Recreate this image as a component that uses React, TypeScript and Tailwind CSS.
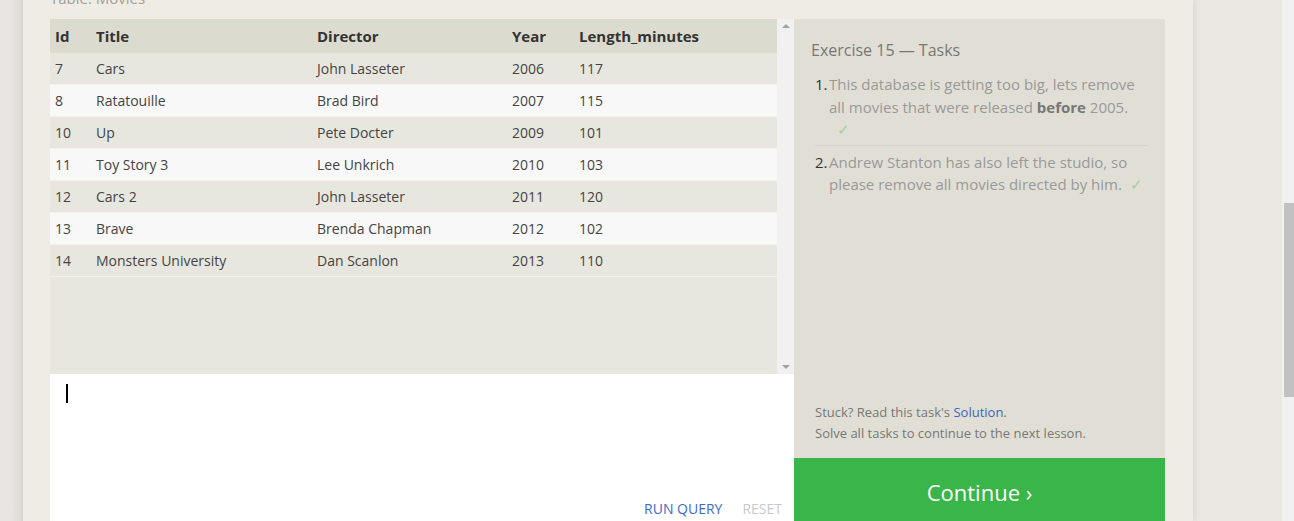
import React from 'react';

type Movie = { id: number; title: string; director: string; year: number; length: number };

const movies: Movie[] = [
    { id: 7, title: 'Cars', director: 'John Lasseter', year: 2006, length: 117 },
    { id: 8, title: 'Ratatouille', director: 'Brad Bird', year: 2007, length: 115 },
    { id: 10, title: 'Up', director: 'Pete Docter', year: 2009, length: 101 },
    { id: 11, title: 'Toy Story 3', director: 'Lee Unkrich', year: 2010, length: 103 },
    { id: 12, title: 'Cars 2', director: 'John Lasseter', year: 2011, length: 120 },
    { id: 13, title: 'Brave', director: 'Brenda Chapman', year: 2012, length: 102 },
    { id: 14, title: 'Monsters University', director: 'Dan Scanlon', year: 2013, length: 110 },
];

const cols = 'grid grid-cols-[41px_221px_195px_67px_1fr] pl-[5px]';

const Check: React.FC = () => <span className="text-[#9fcf9f] text-[15px] ml-2">✓</span>;

const App: React.FC = () => {
    return (
        <div className="h-[521px] overflow-hidden flex bg-[#ebe7e3] font-['Open_Sans',sans-serif] text-[#333]">
            <div className="w-[23px] shrink-0 bg-gradient-to-r from-[#e9e5e2] from-50% to-[#dcd6d4]" />

            {/* lesson card */}
            <div className="w-[1170px] shrink-0 bg-[#efece5] pl-[27px] pr-[28px] shadow-[2px_0_6px_rgba(0,0,0,0.07)]">
                <div className="mt-[-12px] mb-[11px] text-[15px] leading-[20px] text-[#a3a09a]">Table: Movies</div>

                <div className="flex">
                    {/* left: results + editor */}
                    <div className="w-[744px] shrink-0 flex flex-col">
                        <div className="h-[355px] flex bg-[#e8e7df]">
                            <div className="flex-1 text-[14px]">
                                <div className={`${cols} h-[34px] items-center bg-[#dcdbd0] font-bold text-[15px] text-[#333]`}>
                                    <div>Id</div>
                                    <div>Title</div>
                                    <div>Director</div>
                                    <div>Year</div>
                                    <div>Length_minutes</div>
                                </div>
                                {movies.map((m, i) => (
                                    <div
                                        key={m.id}
                                        className={`${cols} h-[32px] items-center text-[#444] border-b border-[#f1f0ea] ${i % 2 === 0 ? 'bg-[#e8e7df]' : 'bg-[#f8f8f8]'}`}
                                    >
                                        <div>{m.id}</div>
                                        <div>{m.title}</div>
                                        <div>{m.director}</div>
                                        <div>{m.year}</div>
                                        <div>{m.length}</div>
                                    </div>
                                ))}
                            </div>
                            <div className="w-[17px] bg-[#f1f1f2] flex flex-col justify-between items-center py-[5px]">
                                <div className="w-0 h-0 border-x-[4px] border-x-transparent border-b-[4px] border-b-[#a3a3a3]" />
                                <div className="w-0 h-0 border-x-[4px] border-x-transparent border-t-[4px] border-t-[#a3a3a3]" />
                            </div>
                        </div>

                        <div className="h-[160px] bg-white flex flex-col">
                            <div className="px-[16px] pt-[10px] flex-1">
                                <div className="w-[2px] h-[19px] bg-black" />
                            </div>
                            <div className="flex justify-end gap-[20px] pr-[12px] pb-[16px] text-[14px] leading-[18px]">
                                <button className="text-[#3d6ac6]">RUN QUERY</button>
                                <button className="text-[#c9c9c9]">RESET</button>
                            </div>
                        </div>
                    </div>

                    {/* right: tasks */}
                    <div className="w-[371px] shrink-0 flex flex-col">
                        <div className="h-[439px] bg-[#e1dfd5] px-[17px] pt-[20px] pb-[14px] flex flex-col">
                            <h2 className="text-[16px] leading-[22px] text-[#777]">Exercise 15 — Tasks</h2>
                            <ol className="mt-[12px] pl-[4px] text-[15px] leading-[22.5px] text-[#999]">
                                <li className="flex pb-[4px] border-b border-[#d7d5cb]">
                                    <span className="w-[14px] shrink-0 text-[#333]">1.</span>
                                    <span>
                                        This database is getting too big, lets remove all movies that were released{' '}
                                        <b className="text-[#777]">before</b> 2005.
                                        <br />
                                        <Check />
                                    </span>
                                </li>
                                <li className="flex pt-[5px]">
                                    <span className="w-[14px] shrink-0 text-[#333]">2.</span>
                                    <span>
                                        Andrew Stanton has also left the studio, so please remove all movies directed by him.
                                        <Check />
                                    </span>
                                </li>
                            </ol>
                            <div className="mt-auto pl-[4px] text-[13px] leading-[21px] text-[#777]">
                                <p>
                                    Stuck? Read this task's <a className="text-[#3e63c4]">Solution</a>.
                                </p>
                                <p>Solve all tasks to continue to the next lesson.</p>
                            </div>
                        </div>
                        <button className="h-[80px] bg-[#39b54a] text-white text-[22px] leading-[68px] flex justify-center">
                            <span>Continue ›</span>
                        </button>
                    </div>
                </div>
            </div>

            <div className="flex-1" />

            {/* page scrollbar */}
            <div className="w-[12px] shrink-0 bg-[#f1f1f1] pt-[203px] pl-[2px]">
                <div className="h-[194px] bg-[#c1c1c1]" />
            </div>
        </div>
    );
};

export default App;
